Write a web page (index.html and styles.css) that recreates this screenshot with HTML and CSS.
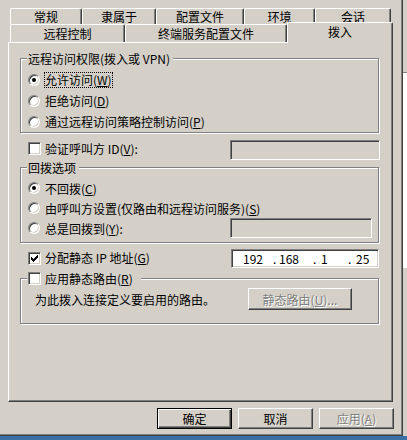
FILE: index.html
```html
<!DOCTYPE html>
<html lang="zh-CN">
<head>
  <meta charset="UTF-8">
  <title>拨入</title>
  <link rel="stylesheet" href="styles.css">
</head>
<body>
  <div class="screen">
    <div class="desk">
      <div class="dialog">

        <div class="tabs">
          <div class="tab-row back">
            <div class="tab t-general">常规</div>
            <div class="tab t-member">隶属于</div>
            <div class="tab t-profile">配置文件</div>
            <div class="tab t-env">环境</div>
            <div class="tab t-session">会话</div>
          </div>
          <div class="tab-row front">
            <div class="tab t-remote">远程控制</div>
            <div class="tab t-ts">终端服务配置文件</div>
            <div class="tab t-dialin selected">拨入</div>
          </div>
        </div>

        <div class="panel">
          <div class="group access">
            <div class="group-title">远程访问权限(拨入或 VPN)</div>
            <div class="opt"><span class="radio on"></span><span class="label focus">允许访问(<u>W</u>)</span></div>
            <div class="opt"><span class="radio"></span><span class="label">拒绝访问(<u>D</u>)</span></div>
            <div class="opt"><span class="radio"></span><span class="label">通过远程访问策略控制访问(<u>P</u>)</span></div>
          </div>

          <div class="field-row caller">
            <span class="check"></span>
            <span class="label">验证呼叫方 ID(<u>V</u>):</span>
            <span class="edit caller-id"></span>
          </div>

          <div class="group callback">
            <div class="group-title">回拨选项</div>
            <div class="opt"><span class="radio on"></span><span class="label">不回拨(<u>C</u>)</span></div>
            <div class="opt"><span class="radio"></span><span class="label">由呼叫方设置(仅路由和远程访问服务)(<u>S</u>)</span></div>
            <div class="opt">
              <span class="radio"></span><span class="label">总是回拨到(<u>Y</u>):</span>
              <span class="edit callback-no"></span>
            </div>
          </div>

          <div class="field-row ip-row">
            <span class="check">
              <svg width="7" height="7" viewBox="0 0 7 7" shape-rendering="crispEdges">
                <path d="M0 2h1v3H0z M1 3h1v3H1z M2 4h1v3H2z M3 3h1v3H3z M4 2h1v3H4z M5 1h1v3H5z M6 0h1v3H6z" fill="#000"/>
              </svg>
            </span>
            <span class="label">分配静态 IP 地址(<u>G</u>)</span>
            <span class="edit ip">
              <span class="octet o1">192</span><span class="dot">.</span><span class="octet o2">168</span><span class="dot">.</span><span class="octet o3">1</span><span class="dot">.</span><span class="octet o4">25</span>
            </span>
          </div>

          <div class="group route">
            <div class="group-title"><span class="check"></span><span class="label">应用静态路由(<u>R</u>)</span></div>
            <div class="route-row">
              <span>为此拨入连接定义要启用的路由。</span>
              <button class="btn" disabled>静态路由(<u>U</u>)...</button>
            </div>
          </div>
        </div>

        <div class="actions">
          <button class="btn default">确定</button>
          <button class="btn">取消</button>
          <button class="btn" disabled>应用(<u>A</u>)</button>
        </div>
      </div>

      <div class="side">
        <div class="side-top"></div>
        <div class="side-sheet"></div>
      </div>
    </div>
    <div class="taskbar"></div>
  </div>
</body>
</html>
```

FILE: styles.css
```css
body {
  margin: 0;
  font-family: "Noto Sans CJK SC", sans-serif;
  font-size: 12px;
  color: #000;
}

.screen {
  width: 407px;
  height: 440px;
  display: flex;
  flex-direction: column;
}

.desk {
  display: flex;
  height: 436px;
}

.taskbar {
  flex: 1;
  background: #3a6ea5;
}

.dialog {
  width: 403px;
  box-sizing: border-box;
  background: #d4d0c8;
  border-right: 1px solid #404040;
  border-bottom: 1px solid #404040;
  box-shadow: inset -1px -1px #808080;
}

/* tab strip */
.tabs {
  padding: 8px 0 0 10px;
}

.tab-row {
  display: flex;
}

.tab-row.back { height: 16px; }
.tab-row.front { height: 18px; }

.tab {
  flex: none;
  box-sizing: border-box;
  height: 100%;
  background: #d4d0c8;
  border-top: 1px solid #fff;
  border-left: 1px solid #fff;
  border-right: 1px solid #404040;
  border-radius: 2px 2px 0 0;
  box-shadow: inset -1px 0 #808080;
  text-align: center;
  line-height: 15px;
  white-space: nowrap;
}

.front .tab { line-height: 17px; }

.tab.selected {
  position: relative;
  z-index: 1;
  height: 21px;
  margin: -2px -2px -1px 0;
  line-height: 18px;
}

.t-general { width: 72px; }
.t-member { width: 74px; }
.t-profile { width: 88px; }
.t-env { width: 71px; }
.t-session { width: 76px; }
.t-remote { width: 115px; }
.t-ts { width: 162px; }
.t-dialin { width: 106px; }

/* page */
.panel {
  width: 385px;
  height: 360px;
  margin-left: 8px;
  box-sizing: border-box;
  padding: 15px 0 0 11px;
  border: 1px solid;
  border-color: #fff #404040 #404040 #fff;
  box-shadow: inset -1px -1px #808080;
}

.group {
  width: 359px;
  box-sizing: border-box;
  border: 1px solid #808080;
  box-shadow: inset 1px 1px #fff, 1px 1px #fff;
}

.group-title {
  display: flex;
  align-items: center;
  width: max-content;
  height: 13px;
  line-height: 13px;
  margin: -7px 0 0 6px;
  padding: 0 3px 0 1px;
  background: #d4d0c8;
  white-space: nowrap;
}

.group-title + .opt { margin-top: 4px; }

.opt {
  display: flex;
  align-items: center;
  height: 21px;
  padding-left: 7px;
}

.label {
  margin-left: 5px;
  white-space: nowrap;
}

.check + .label { margin-left: 4px; }

.label.focus {
  margin-left: 4px;
  border: 1px dotted #000;
  line-height: 14px;
}

.callback {
  margin-top: 7px;
  padding-bottom: 4px;
}

.callback .opt { height: 20px; }

.callback-no {
  width: 142px;
  height: 20px;
  margin: 0 6px 0 auto;
}

.field-row {
  display: flex;
  align-items: flex-start;
  width: 360px;
  box-sizing: border-box;
  padding-left: 8px;
}

.field-row .label { line-height: 17px; }

.caller {
  height: 20px;
  margin-top: 7px;
}

.caller .check { margin-top: 2px; }

.caller-id {
  width: 150px;
  height: 20px;
  margin-left: auto;
}

.ip-row {
  height: 19px;
  margin-top: 6px;
  padding-right: 1px;
}

.ip-row .check { margin-top: 3px; }

.route {
  margin-top: 10px;
  padding-bottom: 13px;
}

.route .group-title { padding-right: 8px; }

.route-row {
  display: flex;
  align-items: center;
  height: 22px;
  margin-top: 3px;
  padding: 0 26px 0 14px;
  white-space: nowrap;
}

.route-row .btn {
  width: 104px;
  height: 22px;
  margin-left: auto;
}

/* controls */
.radio {
  flex: none;
  width: 12px;
  height: 12px;
  box-sizing: border-box;
  border: 1px solid;
  border-color: #808080 #fff #fff #808080;
  border-radius: 50%;
  background: #fff;
  box-shadow: inset 1px 1px #404040, inset -1px -1px #d4d0c8;
  display: flex;
  align-items: center;
  justify-content: center;
}

.radio.on::after {
  content: "";
  width: 4px;
  height: 4px;
  border-radius: 50%;
  background: #000;
}

.check {
  flex: none;
  width: 13px;
  height: 13px;
  box-sizing: border-box;
  border: 1px solid;
  border-color: #808080 #fff #fff #808080;
  box-shadow: inset 1px 1px #404040, inset -1px -1px #d4d0c8;
  background: #fff;
  display: flex;
  align-items: center;
  justify-content: center;
}

.edit {
  flex: none;
  box-sizing: border-box;
  border: 1px solid;
  border-color: #808080 #fff #fff #808080;
  box-shadow: inset 1px 1px #404040, inset -1px -1px #d4d0c8;
  background: #d4d0c8;
}

.ip {
  width: 148px;
  height: 19px;
  margin-left: auto;
  display: flex;
  align-items: center;
  padding-left: 11px;
  background: #fff;
  line-height: 15px;
}

.octet { flex: none; }
.o1 { width: 30px; }
.o2 { width: 34px; }
.o3 { width: 27px; padding-left: 2px; }
.o4 { padding-left: 2px; }
.dot { flex: none; width: 6px; }

.btn {
  flex: none;
  box-sizing: border-box;
  width: 75px;
  height: 21px;
  padding: 0;
  font: inherit;
  color: #000;
  background: #d4d0c8;
  border: 1px solid;
  border-color: #fff #404040 #404040 #fff;
  border-radius: 0;
  box-shadow: inset -1px -1px #808080;
  white-space: nowrap;
}

.btn.default {
  border-color: #000;
  box-shadow: inset 1px 1px #fff, inset -1px -1px #404040, inset -2px -2px #808080;
}

.btn:disabled {
  color: #808080;
  text-shadow: 1px 1px #fff;
}

.actions {
  display: flex;
  justify-content: flex-end;
  gap: 6px;
  margin-top: 6px;
  padding-right: 8px;
}

/* window behind the dialog */
.side {
  flex: 1;
  display: flex;
  flex-direction: column;
  overflow: hidden;
  background: #d4d0c8;
}

.side-top {
  height: 72px;
  border-bottom: 1px solid #808080;
}

.side-sheet {
  height: 195px;
  background: #fff;
}
```
